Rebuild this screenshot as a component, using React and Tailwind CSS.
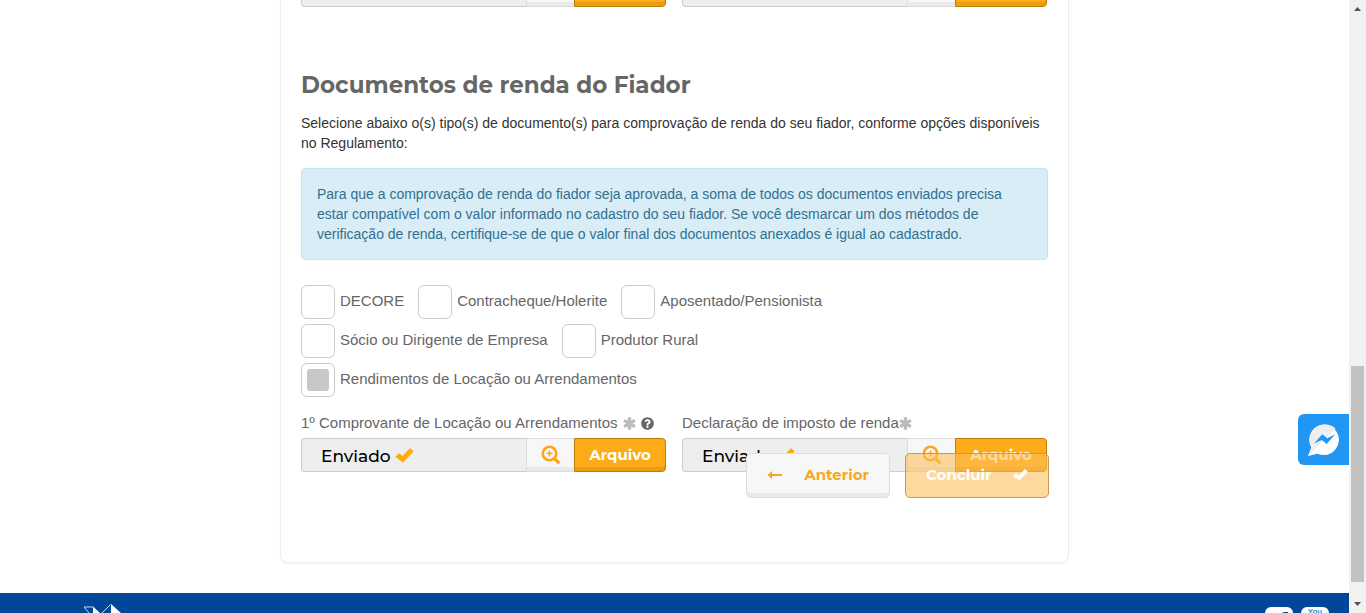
import { FaQuestionCircle } from "react-icons/fa";

const display = "font-['Montserrat','Inter',sans-serif]";

function Check({ className }) {
  return (
    <svg viewBox="0 0 18 15" className={className} fill="currentColor" aria-hidden="true">
      <path d="M0.2 8.2 L3.1 5.4 Q3.5 5.1 4 5.4 L7 8 L14.2 0.4 Q14.6 0 15 0.4 L17.8 3 Q18.1 3.4 17.7 3.8 L7.8 14.2 Q7.3 14.7 6.8 14.2 L0.2 9 Q-0.1 8.6 0.2 8.2 Z" />
    </svg>
  );
}

function Required({ className }) {
  return (
    <svg viewBox="0 0 14 14" className={`size-[13px] ${className}`} stroke="#bbb" strokeWidth="3.6" aria-label="obrigatório">
      <path d="M7 0.3 V13.7 M1.2 3.6 L12.8 10.4 M1.2 10.4 L12.8 3.6" />
    </svg>
  );
}

function ZoomPlus() {
  return (
    <svg viewBox="0 0 20 20" className="size-5" fill="none" stroke="currentColor" aria-hidden="true">
      <circle cx="8.5" cy="8.5" r="6.7" strokeWidth="2.6" />
      <path d="M13.4 13.4 L18.4 18.4" strokeWidth="3.2" />
      <path d="M8.5 5.4 V11.6 M5.4 8.5 H11.6" strokeWidth="1.6" />
    </svg>
  );
}

function FileRow({ label, status, action }) {
  return (
    <div className="flex h-[34px]">
      <div
        className={`flex flex-1 items-center gap-1 rounded-l border border-r-0 border-[#ccc] bg-[#eee] pt-0.5 pl-[19px] text-[17px] font-medium text-black ${display}`}
      >
        {status}
        {status && <Check className="mb-0.5 h-[15px] w-[19px] text-[#ffa90f]" />}
      </div>
      <button
        type="button"
        aria-label={`Visualizar ${label}`}
        className="flex w-12 items-center justify-center border border-r-0 border-[#ddd] bg-[#f7f7f7] text-[#faa61a] shadow-[inset_0_-4px_0_#e9e9e9]"
      >
        <ZoomPlus />
      </button>
      <button
        type="button"
        aria-label={`Arquivo ${label}`}
        className={`w-[92px] rounded-r border border-[#bd7d0e] bg-[#fdab18] pb-0.5 text-[15px] leading-none font-bold text-white shadow-[inset_0_-4px_0_#e99c14] ${display}`}
      >
        {action}
      </button>
    </div>
  );
}

function Option({ children, defaultChecked }) {
  return (
    <label className="flex items-center gap-[5px] text-[15px] leading-5 text-[#666]">
      <input
        type="checkbox"
        defaultChecked={defaultChecked}
        className="grid size-[34px] appearance-none place-content-center rounded-md border border-[#ccc] bg-white before:size-[22px] before:rounded-[3px] checked:before:bg-[#c8c8c8]"
      />
      <span className="pb-0.5">{children}</span>
    </label>
  );
}

export default function App() {
  return (
    <div className="flex h-screen overflow-hidden bg-white font-['Liberation_Sans',Arial,sans-serif]">
      <div className="relative flex min-w-0 flex-1 flex-col">
        <main className="flex min-h-0 flex-1 flex-col justify-end overflow-hidden pb-[30px]">
          <section className="relative mx-auto w-full max-w-[789px] rounded-b-lg border border-t-0 border-[#eee] px-5 pb-[90px] shadow-[0_1px_2px_rgba(0,0,0,0.05)]">
            <div className="grid grid-cols-2 gap-4 pr-px">
              <FileRow label="do comprovante" />
              <FileRow label="da declaração" />
            </div>
            <h2 className={`mt-16 mb-[14px] text-[23px] leading-7 font-bold text-[#666] ${display}`}>
              Documentos de renda do Fiador
            </h2>
            <p className="text-sm leading-5 text-[#333]">
              Selecione abaixo o(s) tipo(s) de documento(s) para comprovação de renda do seu fiador, conforme opções
              disponíveis no Regulamento:
            </p>
            <div className="mt-[15px] rounded border border-[#bce8f1] bg-[#d9edf7] p-[15px] text-sm leading-5 text-[#31708f]">
              Para que a comprovação de renda do fiador seja aprovada, a soma de todos os documentos enviados precisa
              estar compatível com o valor informado no cadastro do seu fiador. Se você desmarcar um dos métodos de
              verificação de renda, certifique-se de que o valor final dos documentos anexados é igual ao cadastrado.
            </div>
            <div className="mt-[25px] flex flex-col gap-[5px]">
              <div className="flex gap-[14px]">
                <Option>DECORE</Option>
                <Option>Contracheque/Holerite</Option>
                <Option>Aposentado/Pensionista</Option>
              </div>
              <div className="flex gap-[14px]">
                <Option>Sócio ou Dirigente de Empresa</Option>
                <Option>Produtor Rural</Option>
              </div>
              <Option defaultChecked>Rendimentos de Locação ou Arrendamentos</Option>
            </div>
            <div className="mt-4 grid grid-cols-2 gap-4 pr-px text-[15px] leading-5 text-[#666]">
              <div>
                <div className="mb-[5px] flex items-center">
                  1º Comprovante de Locação ou Arrendamentos
                  <Required className="ml-[5px]" />
                  <FaQuestionCircle className="ml-[5px] size-[13px]" />
                </div>
                <FileRow label="1º Comprovante de Locação" status="Enviado" action="Arquivo" />
              </div>
              <div>
                <div className="mb-[5px] flex items-center">
                  Declaração de imposto de renda
                  <Required className="" />
                </div>
                <FileRow label="Declaração de imposto de renda" status="Enviado" action="Arquivo" />
              </div>
            </div>
            <div className={`absolute right-[19px] bottom-16 flex gap-[15px] text-[15px] font-bold ${display}`}>
              <button
                type="button"
                className="flex h-[45px] w-36 items-center justify-between rounded-[5px] border border-[#ddd] bg-[#f7f7f7] px-5 pb-px text-[#faa61a] shadow-[inset_0_-4px_0_#e9e9e9]"
              >
                <svg viewBox="0 0 16 10" className="h-2.5 w-4" fill="currentColor" aria-hidden="true">
                  <path d="M0.5 5 L5 1 V4 H15 V6 H5 V9 Z" />
                </svg>
                Anterior
              </button>
              <button
                type="button"
                className="flex h-[45px] w-36 items-center justify-between rounded-[5px] border border-[#c79a4c] bg-[#fdc05c]/60 px-5 pb-px text-white"
              >
                Concluir
                <Check className="h-3 w-[15px]" />
              </button>
            </div>
          </section>
        </main>
        <footer className="flex h-5 shrink-0 items-start justify-between overflow-hidden bg-[#004799] pr-5 pl-[83px]">
          <svg viewBox="0 0 40 9" className="mt-[11px] h-[9px] w-10" aria-hidden="true">
            <path d="M1 3 H10 M1 3 L6 9 M19 9 L27.5 0.5" stroke="#c8d9ec" strokeWidth="1" fill="none" />
            <path d="M10 2.5 L17 9 H10 Z M28 0 L38 9 H28 Z" fill="#fff" />
          </svg>
          <div className="mt-[14px] flex gap-2">
            <a href="#facebook" aria-label="Facebook" className="h-7 w-7 rounded-md bg-white">
              <svg viewBox="0 0 28 28" className="size-7" aria-hidden="true">
                <path d="M16 28 V9 Q16 5 20 5 H23 V8 H20 V28 Z" fill="#004799" />
              </svg>
            </a>
            <a
              href="#youtube"
              aria-label="YouTube"
              className="h-7 w-7 rounded-md bg-white text-center text-[8px] leading-[10px] font-bold text-[#1a8fd8]"
            >
              You
            </a>
          </div>
        </footer>
        <a
          href="#messenger"
          aria-label="Messenger"
          className="absolute top-[414px] right-0 flex h-[51px] w-[51px] items-center justify-center rounded-l-md bg-[#2196f3]"
        >
          <svg viewBox="0 0 32 32" className="size-8" aria-hidden="true">
            <path d="M16.5 0.5 A15.3 15.3 0 1 1 9.5 29.8 L0 32 L3.4 23.5 A15.3 15.3 0 0 1 16.5 0.5 Z" fill="#fff" />
            <path d="M16.5 0.5 A15.3 15.3 0 0 1 27.6 4.6 L0 32 L3.4 23.5 A15.3 15.3 0 0 1 16.5 0.5 Z" fill="#eee" />
            <path d="M6 19.5 L14.3 10.3 L19.3 14.3 L27.3 10.3 L18.6 20 L13.8 16 Z" fill="#2196f3" />
          </svg>
        </a>
      </div>
      <div className="flex w-[17px] shrink-0 flex-col items-center bg-[#f1f1f1]" aria-hidden="true">
        <svg viewBox="0 0 17 17" className="size-[17px] shrink-0">
          <path d="M5 11 L8.5 7 L12 11 Z" fill="#505050" />
        </svg>
        <div className="flex-1" />
        <div className="h-[216px] w-[13px] bg-[#c1c1c1]" />
        <svg viewBox="0 0 17 17" className="mt-[14px] size-[17px] shrink-0">
          <path d="M5 6 L8.5 10 L12 6 Z" fill="#505050" />
        </svg>
      </div>
    </div>
  );
}
